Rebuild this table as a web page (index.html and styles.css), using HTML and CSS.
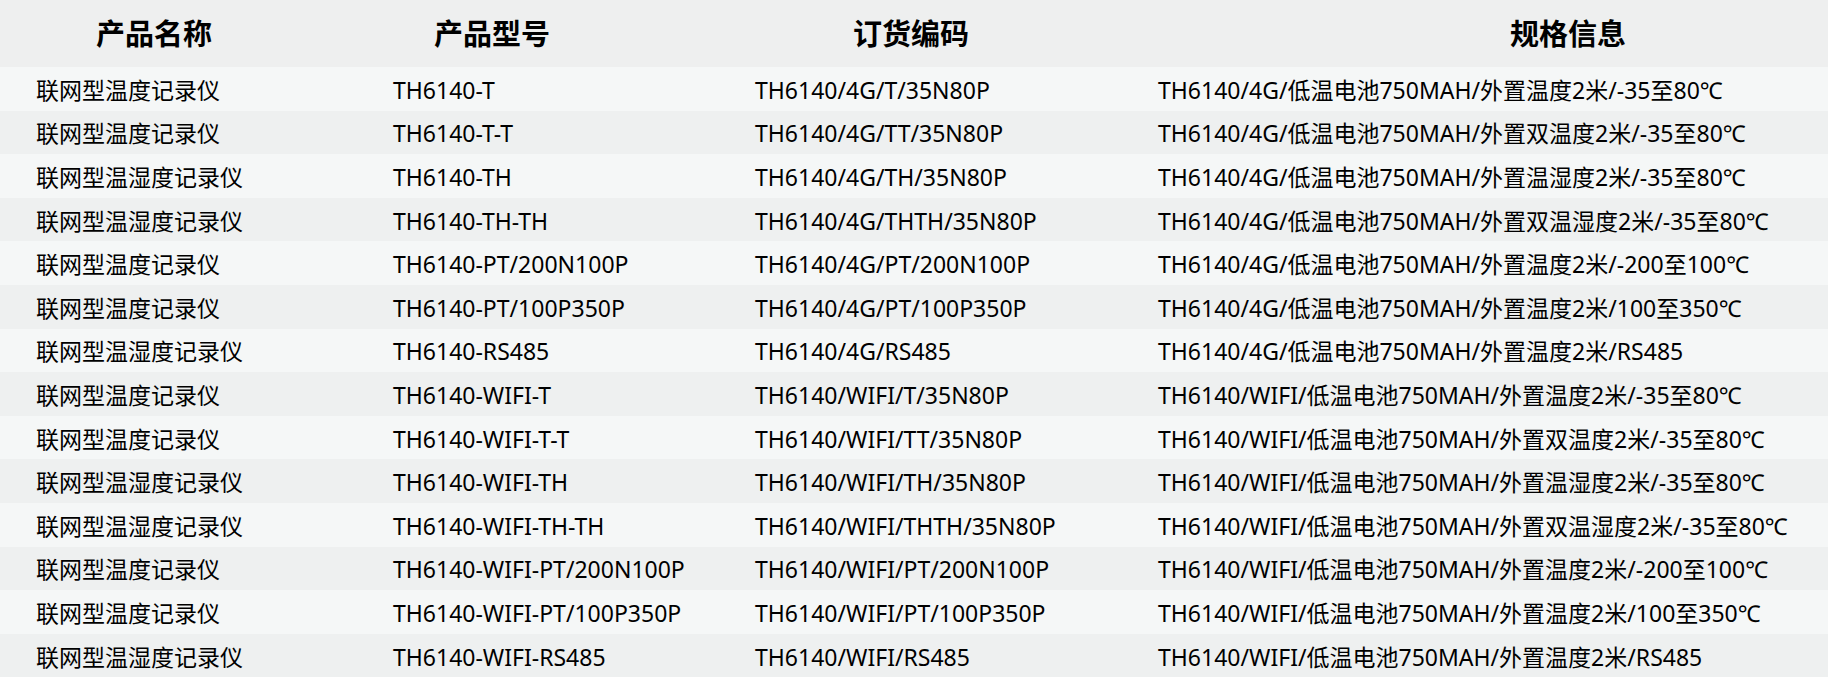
FILE: index.html
```html
<!DOCTYPE html>
<html lang="zh-CN">
<head>
<meta charset="utf-8">
<title>产品列表</title>
<link rel="stylesheet" href="styles.css">
</head>
<body>
<div class="table">
  <div class="row head">
    <div class="cell h1">产品名称</div>
    <div class="cell h2">产品型号</div>
    <div class="cell h3">订货编码</div>
    <div class="cell h4">规格信息</div>
  </div>
  <div class="row"><div class="cell">联网型温度记录仪</div><div class="cell">TH6140-T</div><div class="cell">TH6140/4G/T/35N80P</div><div class="cell">TH6140/4G/低温电池750MAH/外置温度2米/-35至80℃</div></div>
  <div class="row"><div class="cell">联网型温度记录仪</div><div class="cell">TH6140-T-T</div><div class="cell">TH6140/4G/TT/35N80P</div><div class="cell">TH6140/4G/低温电池750MAH/外置双温度2米/-35至80℃</div></div>
  <div class="row"><div class="cell">联网型温湿度记录仪</div><div class="cell">TH6140-TH</div><div class="cell">TH6140/4G/TH/35N80P</div><div class="cell">TH6140/4G/低温电池750MAH/外置温湿度2米/-35至80℃</div></div>
  <div class="row"><div class="cell">联网型温湿度记录仪</div><div class="cell">TH6140-TH-TH</div><div class="cell">TH6140/4G/THTH/35N80P</div><div class="cell">TH6140/4G/低温电池750MAH/外置双温湿度2米/-35至80℃</div></div>
  <div class="row"><div class="cell">联网型温度记录仪</div><div class="cell">TH6140-PT/200N100P</div><div class="cell">TH6140/4G/PT/200N100P</div><div class="cell">TH6140/4G/低温电池750MAH/外置温度2米/-200至100℃</div></div>
  <div class="row"><div class="cell">联网型温度记录仪</div><div class="cell">TH6140-PT/100P350P</div><div class="cell">TH6140/4G/PT/100P350P</div><div class="cell">TH6140/4G/低温电池750MAH/外置温度2米/100至350℃</div></div>
  <div class="row"><div class="cell">联网型温湿度记录仪</div><div class="cell">TH6140-RS485</div><div class="cell">TH6140/4G/RS485</div><div class="cell">TH6140/4G/低温电池750MAH/外置温度2米/RS485</div></div>
  <div class="row"><div class="cell">联网型温度记录仪</div><div class="cell">TH6140-WIFI-T</div><div class="cell">TH6140/WIFI/T/35N80P</div><div class="cell">TH6140/WIFI/低温电池750MAH/外置温度2米/-35至80℃</div></div>
  <div class="row"><div class="cell">联网型温度记录仪</div><div class="cell">TH6140-WIFI-T-T</div><div class="cell">TH6140/WIFI/TT/35N80P</div><div class="cell">TH6140/WIFI/低温电池750MAH/外置双温度2米/-35至80℃</div></div>
  <div class="row"><div class="cell">联网型温湿度记录仪</div><div class="cell">TH6140-WIFI-TH</div><div class="cell">TH6140/WIFI/TH/35N80P</div><div class="cell">TH6140/WIFI/低温电池750MAH/外置温湿度2米/-35至80℃</div></div>
  <div class="row"><div class="cell">联网型温湿度记录仪</div><div class="cell">TH6140-WIFI-TH-TH</div><div class="cell">TH6140/WIFI/THTH/35N80P</div><div class="cell">TH6140/WIFI/低温电池750MAH/外置双温湿度2米/-35至80℃</div></div>
  <div class="row"><div class="cell">联网型温度记录仪</div><div class="cell">TH6140-WIFI-PT/200N100P</div><div class="cell">TH6140/WIFI/PT/200N100P</div><div class="cell">TH6140/WIFI/低温电池750MAH/外置温度2米/-200至100℃</div></div>
  <div class="row"><div class="cell">联网型温度记录仪</div><div class="cell">TH6140-WIFI-PT/100P350P</div><div class="cell">TH6140/WIFI/PT/100P350P</div><div class="cell">TH6140/WIFI/低温电池750MAH/外置温度2米/100至350℃</div></div>
  <div class="row"><div class="cell">联网型温湿度记录仪</div><div class="cell">TH6140-WIFI-RS485</div><div class="cell">TH6140/WIFI/RS485</div><div class="cell">TH6140/WIFI/低温电池750MAH/外置温度2米/RS485</div></div>
</div>
</body>
</html>
```
FILE: styles.css
```css
html, body {
  margin: 0;
  padding: 0;
  background: #ffffff;
}
body {
  font-family: "Noto Sans", "Noto Sans CJK SC", sans-serif;
  color: #000;
}
.table {
  width: 1828px;
}
.row {
  display: grid;
  grid-template-columns: 357px 362px 403px 1fr;
  align-items: center;
  height: 43.6px;
  font-size: 23px;
}
.row:nth-child(even) {
  background: #f5f7f7;
}
.row:nth-child(odd) {
  background: #eef0f0;
}
.row.head {
  height: 67px;
  background: #eeefef;
  font-size: 29px;
  font-weight: 700;
}
.cell {
  padding-left: 36px;
  white-space: nowrap;
  line-height: 1;
  padding-top: 3px;
}
.head .cell {
  padding-top: 0;
}
.head .h1 { padding-left: 96px; }
.head .h2 { padding-left: 77px; }
.head .h3 { padding-left: 134px; }
.head .h4 { padding-left: 388px; }
```
